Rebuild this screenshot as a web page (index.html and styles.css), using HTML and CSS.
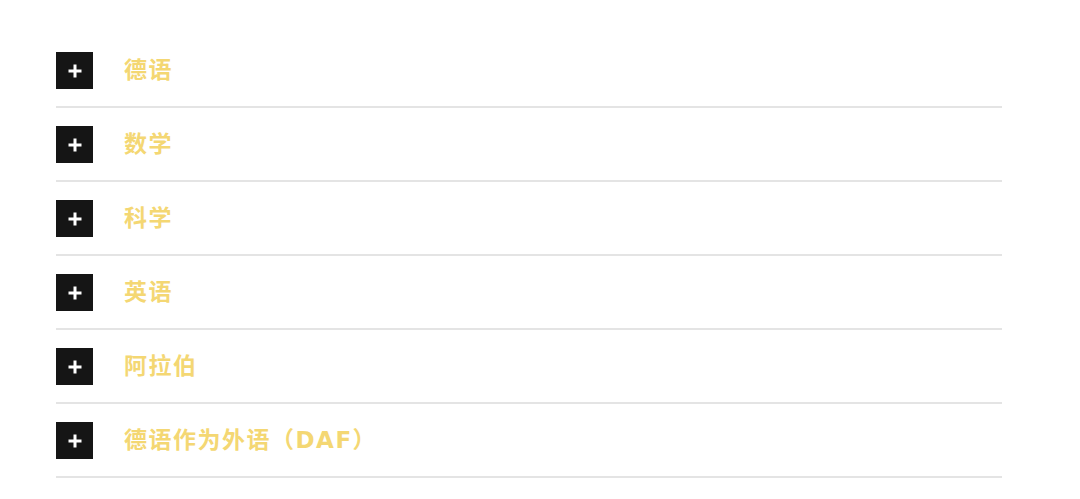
FILE: index.html
```html
<!DOCTYPE html>
<html>
<head>
<meta charset="utf-8">
<link rel="stylesheet" href="styles.css">
</head>
<body>
<ul class="acc">
  <li class="row"><span class="plus"></span><span class="label">德语</span></li>
  <li class="row"><span class="plus"></span><span class="label">数学</span></li>
  <li class="row"><span class="plus"></span><span class="label">科学</span></li>
  <li class="row"><span class="plus"></span><span class="label">英语</span></li>
  <li class="row"><span class="plus"></span><span class="label">阿拉伯</span></li>
  <li class="row"><span class="plus"></span><span class="label">德语作为外语（DAF）</span></li>
</ul>
</body>
</html>
```
FILE: styles.css
```css
html, body { margin: 0; padding: 0; background: #fff; }
.acc {
  list-style: none;
  margin: 0;
  padding: 34px 0 0 56px;
  width: 946px;
}
.row {
  display: flex;
  align-items: center;
  gap: 31px;
  padding: 18px 0 17px;
  border-bottom: 2px solid #e4e4e4;
}
.plus {
  width: 37px;
  height: 37px;
  background: #151515;
  position: relative;
  flex: none;
}
.plus::before, .plus::after {
  content: "";
  position: absolute;
  background: #fff;
  left: 50%;
  top: 50%;
  transform: translate(-50%, -50%);
}
.plus::before { width: 13px; height: 3px; }
.plus::after { width: 3px; height: 13px; }
.label {
  font-family: "DejaVu Sans", "Noto Sans CJK SC", sans-serif;
  font-weight: 700;
  font-size: 23px;
  color: #f4d773;
  letter-spacing: 1.5px;
  line-height: 30px;
  padding-bottom: 2px;
}
```
